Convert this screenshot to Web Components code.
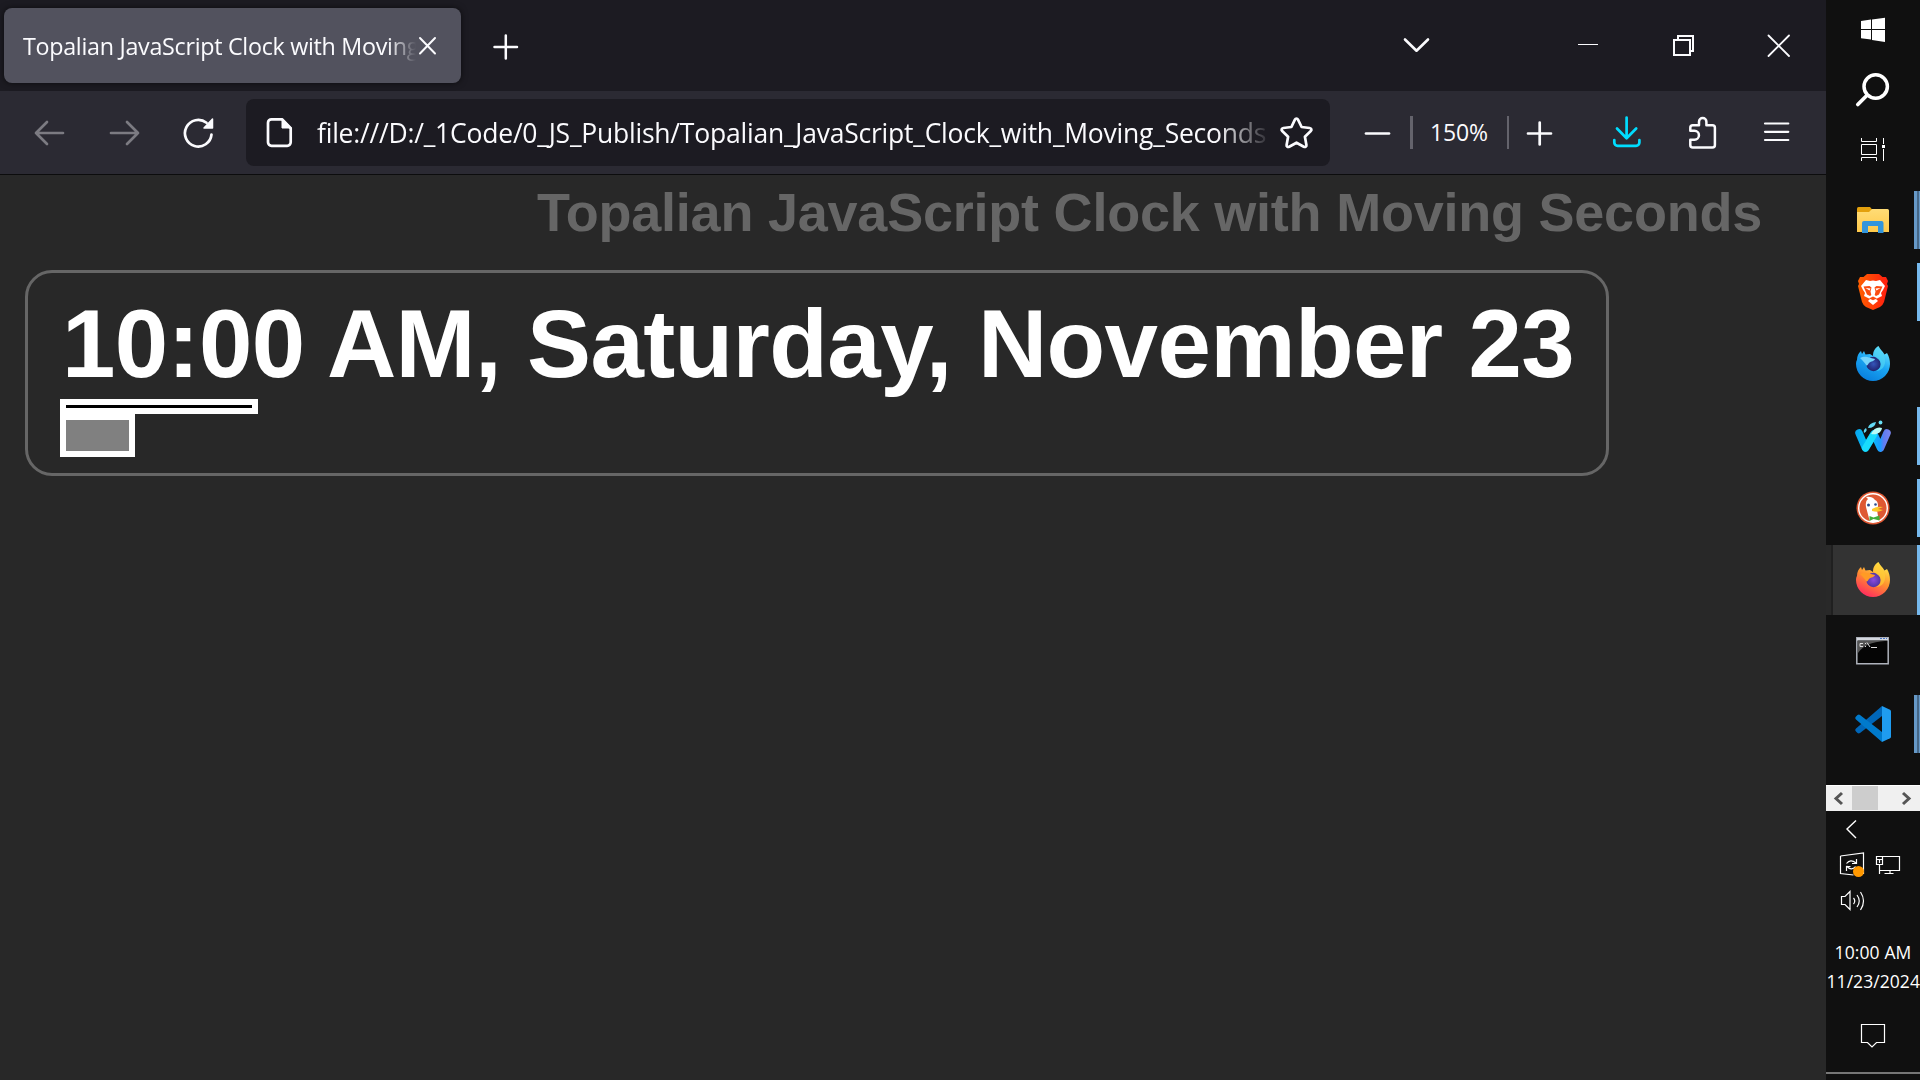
<!DOCTYPE html>
<html lang="en"><head><meta charset="utf-8"><title>Topalian JavaScript Clock with Moving Seconds</title>
<style>html,body{margin:0;height:100%;overflow:hidden;background:#111}body{font-family:"Open Sans","Noto Sans",sans-serif}</style></head>
<body>
<desktop-shell>
  <tab-strip slot="browser">Topalian JavaScript Clock with Moving</tab-strip>
  <nav-bar slot="browser">file:///D:/_1Code/0_JS_Publish/Topalian_JavaScript_Clock_with_Moving_Seconds</nav-bar>
  <clock-page slot="browser"><span slot="heading">Topalian JavaScript Clock with Moving Seconds</span><span slot="time">10:00 AM, Saturday, November 23</span></clock-page>
  <task-bar slot="side"></task-bar>
</desktop-shell>
<script>
function define(name, html) {
  const t = document.createElement('template');
  t.innerHTML = html;
  customElements.define(name, class extends HTMLElement {
    constructor() { super(); this.attachShadow({mode: 'open'}).append(t.content.cloneNode(true)); }
  });
}

/* Spreads its text over a given width by adjusting letter spacing. */
customElements.define('fit-text', class extends HTMLElement {
  constructor() {
    super();
    this.attachShadow({mode: 'open'}).innerHTML = '<style>:host{display:block;white-space:nowrap}span{display:inline-block}</style><span><slot></slot></span>';
  }
  connectedCallback() {
    requestAnimationFrame(() => this.fit());
    this.fit();
  }
  fit() {
    const s = this.shadowRoot.querySelector('span');
    s.style.letterSpacing = '0px';
    const w = s.getBoundingClientRect().width, n = Number(this.getAttribute('chars'));
    if (w) s.style.letterSpacing = (Number(this.getAttribute('width')) - w) / n + 'px';
  }
});

define('desktop-shell', `<style>
:host{display:flex;width:1920px;height:1080px;overflow:hidden}
main{width:1826px;display:flex;flex-direction:column}aside{width:94px}
</style><main><slot name="browser"></slot></main><aside><slot name="side"></slot></aside>`);

define('tab-strip', `<style>
:host{display:flex;height:91px;background:#1c1b22;color:#fbfbfe;padding-left:4px;box-sizing:border-box}
.tab{width:457px;height:75px;margin-top:8px;border-radius:8px;background:#52525e;box-shadow:0 0 6px #0009;display:flex;align-items:center;box-sizing:border-box;padding-left:19px}
.t{width:394px;height:40px;line-height:41px;font-size:23.3px;overflow:hidden;-webkit-mask-image:linear-gradient(90deg,#000 365px,transparent 393px);mask-image:linear-gradient(90deg,#000 365px,transparent 393px)}
svg{fill:none;stroke:#fbfbfe;stroke-linecap:round;stroke-width:2;flex:none;display:block}
.sp{flex:1}
</style>
<div class="tab"><div class="t"><fit-text width="396" chars="37"><slot></slot></fit-text></div>
<svg width="24" height="75" viewBox="417 8 24 75"><path d="M420 38l15 15.500M435 38l-15 15.500"/></svg></div>
<svg width="90" height="91" viewBox="461 0 90 91"><path stroke-width="2.500" d="M494.500 47H517M505.800 35.500v23"/></svg>
<div class="sp"></div>
<svg width="446" height="91" viewBox="1380 0 446 91"><path stroke-width="2.600" stroke-linejoin="round" d="M1405 39.500l11.500 11.200L1428 39.500"/><path stroke-width="1" stroke-linecap="butt" d="M1578 44.500h20"/><path stroke-width="2" stroke-linecap="butt" d="M1674 40h16v15h-16zM1678 40v-4h15v15h-3"/><path stroke-width="1.800" d="M1768.500 35.500l20.500 20.500M1789 35.500l-20.500 20.500"/></svg>`);

define('nav-bar', `<style>
:host{display:flex;height:84px;background:#2b2a33;border-bottom:1px solid #0c0c0d;box-sizing:border-box;color:#fbfbfe}
svg{display:block;flex:none;fill:none;stroke:#fbfbfe;stroke-width:2.700;stroke-linecap:round;stroke-linejoin:round}
.url{width:1084px;height:67px;margin-top:8px;background:#1c1b22;border-radius:8px;display:flex;align-items:center}
.u{flex:none;width:951px;height:44px;line-height:44px;font-size:26.500px;overflow:hidden;-webkit-mask-image:linear-gradient(90deg,#000 900px,transparent 955px);mask-image:linear-gradient(90deg,#000 900px,transparent 955px)}
.z{width:57px;padding:0 20px 0 17px;font-size:23px;line-height:32px;margin-top:25px;height:32px}
.bar{width:3px;height:33px;background:#64636c;margin-top:25px}.b2{width:2px}
</style>
<svg width="246" height="83" viewBox="0 91 246 83"><g stroke="#7c7b82"><path d="M63 133H36M47 122L36 133L47 144"/><path d="M111 133h27M127 122l11 11-11 11"/></g>
<path d="M211.500 134.500A13.300 13.300 0 1 1 206.500 122.800"/><path fill="#fbfbfe" stroke-width="1.500" d="M212.500 119v9h-8.500z"/></svg>
<div class="url"><svg width="71" height="67" viewBox="246 99 71 67"><path d="M271.500 119.300h10.500l8.700 9v14a3.500 3.500 0 0 1-3.500 3.500h-15.700a3.500 3.500 0 0 1-3.500-3.500v-19.500a3.500 3.500 0 0 1 3.500-3.500z"/><path fill="#fbfbfe" stroke-width="1" d="M282 119v9h9z"/></svg>
<div class="u"><fit-text width="949" chars="77"><slot></slot></fit-text></div>
<svg width="62" height="67" viewBox="1268 99 62 67"><path d="M1294.900 119.600c.7-1.500 2.400-1.500 3.100 0l3.600 7.400 8.100 1c1.700.2 2.300 1.900 1.100 3l-5.900 5.700 1.500 8.200c.3 1.600-1.100 2.600-2.600 1.800l-7.300-4-7.300 4c-1.500.8-2.900-.2-2.600-1.800l1.500-8.200-5.900-5.700c-1.200-1.100-.6-2.800 1.100-3l8.100-1z"/></svg></div>
<svg width="80" height="83" viewBox="1330 91 80 83"><path d="M1366 133.500h23"/></svg>
<div class="bar"></div><div class="z"><fit-text width="58" chars="4">150%</fit-text></div><div class="bar b2"></div>
<svg width="317" height="83" viewBox="1509 91 317 83"><path d="M1528 133.500h23M1539.700 122.500v22"/>
<g stroke="#00ddff"><path d="M1626.600 117.500v20.500M1617 128.500l9.600 9.700 9.600-9.700M1614.300 140v2.500a3.300 3.300 0 0 0 3.300 3.300h18.500a3.300 3.300 0 0 0 3.300-3.300V140"/></g>
<path stroke-width="2.500" d="M1690.300 130.800v-3a2.500 2.500 0 0 1 2.500-2.500h6.200v-3.600a3.700 3.700 0 0 1 7.400 0v3.600h6a2.500 2.500 0 0 1 2.500 2.500v17.200a2.500 2.500 0 0 1-2.500 2.500h-19.600a2.500 2.500 0 0 1-2.500-2.500v-5.300h4.200a4.450 4.450 0 0 0 0-8.900z"/>
<path stroke-width="2.200" d="M1765 123.500h23.300M1765 131.800h23.300M1765 140h23.300"/></svg>`);

define('moving-seconds', `<style>
:host{display:block}div{border:6px solid #fff;box-sizing:border-box}
.a{width:198px;height:15px;background:#000}.b{width:75px;height:43px;background:#808080}
</style><div class="a"></div><div class="b"></div>`);

define('clock-page', `<style>
:host{display:flex;flex-direction:column;flex:1;background:#282828;font-family:"Liberation Sans",Arial,sans-serif;font-weight:700}
.h{margin-left:537px;height:95px;line-height:74px;font-size:54px;color:#666}
.card{margin-left:25px;width:1584px;height:206px;box-sizing:border-box;border:3px solid #666;border-radius:27px;padding:17px 32px 0}
.t{color:#fff;font-size:96px;line-height:107px;height:109px;padding-left:2px}
</style><div class="h"><fit-text width="1225" chars="45"><slot name="heading"></slot></fit-text></div>
<div class="card"><div class="t"><fit-text width="1512" chars="31"><slot name="time"></slot></fit-text></div><moving-seconds></moving-seconds></div>`);

customElements.define('task-item', class extends HTMLElement {
  constructor() {
    super();
    this.attachShadow({mode: 'open'}).innerHTML = `<style>
:host{display:flex;height:72px;align-items:center;box-sizing:border-box}
.i{flex:1;padding-left:3px;display:flex;justify-content:center}
.m{width:3px;height:58px}
:host([open]) .m{background:#76b9ed}
:host([many]) .m{width:6px;background:linear-gradient(90deg,#6699c8 3px,#466787 3px 5px,#6699c8 5px)}
:host([many]) .i{padding-left:6px}
:host([raised]) .i{padding-bottom:2px}
:host([active]){height:70px;margin:1px 0;background:linear-gradient(90deg,#292929 5px,#202020 5px 7px,#333 7px)}
:host([active]) .m{height:70px}
</style><div class="i"><slot></slot></div><div class="m"></div>`;
  }
});

const fox = (id, c) => `<svg width="34" height="36" viewBox="0 0 34 36"><defs><linearGradient id="${id}" x1=".8" y1="0" x2=".3" y2="1"><stop offset="0" stop-color="${c[0]}"/><stop offset=".5" stop-color="${c[1]}"/><stop offset="1" stop-color="${c[2]}"/></linearGradient><radialGradient id="${id}b"><stop offset="0" stop-color="${c[3]}"/><stop offset="1" stop-color="${c[4]}"/></radialGradient></defs>
<path fill="url(#${id})" d="M1 15c0-4 1.500-7 4-9l1 3 2-3 1.500 3.500L14 9l3 2c0-5 2-8 5.500-10 1 3 4 5 6 8.500L31 8c2 3 3 7 3 11a17 17 0 0 1-34 0c0-1.500.3-3 1-4z"/>
<circle cx="17.500" cy="19" r="7.200" fill="url(#${id}b)"/>
<path fill="${c[5]}" d="M4 13c3-2 7-1.500 9-.5l6 1.500c-.5 2-4 2.500-5.500 3.500-1.500 1-1.500 3-3 3C9 18 7 16 4 13z"/><path fill="${c[6]}" opacity=".65" d="M23 2c1 5 5 7 6 12 1 7-3 12-9 12 5-2 6-8 3-11-2-2-5-3-5-6 0-3 2-6 5-7z"/></svg>`;

define('task-bar', `<style>
:host{display:flex;flex-direction:column;width:94px;height:1080px;background:#101010;color:#fff}
svg{display:block}.top,.tray,.note{flex:none}.top{height:184px}
.scroll{height:26px;margin-top:25px;background:#f0f0f0}
.time{height:75px;font-size:17.500px;line-height:29px;padding-top:18px;box-sizing:border-box}
.time .a{padding-left:8.500px}.time .b{padding-left:.5px}
</style>
<svg class="top" width="94" height="184" viewBox="1826 0 94 184" fill="none" stroke="#fff">
<path fill="#fff" stroke="none" d="M1861 21l10-1.400V29h-10zM1872 19.400l13-1.600V29h-13zM1861 30h10v9.600l-10-1.300zM1872 30h13v12l-13-2z"/>
<circle cx="1875.700" cy="86.500" r="11.700" stroke-width="3.500"/><path stroke-width="3.700" stroke-linecap="round" d="M1866.800 95.500l-9 9"/>
<path stroke-width="1" d="M1861.500 138v3.500h15V138M1861.500 144.500h15v10h-15zM1861.500 161v-3.500h15v3.500M1883.500 138v6M1883.500 149v12"/><path fill="#fff" stroke="none" d="M1882 145h3v3h-3z"/></svg>
<task-item many><svg width="32" height="27" viewBox="0 0 32 27"><defs><linearGradient id="fo" x2="0" y2="1"><stop stop-color="#ffdc76"/><stop offset="1" stop-color="#ffc94a"/></linearGradient></defs><path fill="#e3a00d" d="M0 1.500Q0 0 1.500 0H13l2.500 3L13 6H0z"/><path fill="url(#fo)" d="M0 5h12l3-3h15.500Q32 2 32 3.500V25H0z"/><path fill="#3295dc" d="M5 26V16q0-2 2-2h17.500q2 0 2 2v10H21v-7H11v7z"/></svg></task-item>
<task-item open><svg width="30" height="36" viewBox="0 0 30 36"><defs><linearGradient id="br"><stop stop-color="#ff6000"/><stop offset="1" stop-color="#ff1d10"/></linearGradient></defs><path fill="url(#br)" d="M9 0h12l3.500 3H28l2 4-1 3 1 2-4 16q-1 3-4 5l-7 3-7-3q-3-2-4-5L0 12l1-2-1-3 2-4h3.500z"/><path fill="#fff" d="M8 6l4 1q3-1 6 0l4-1 5 6-2 4-2 3 1 3-4 2-2 1 2 2-5 4-5-4 2-2-2-1-4-2 1-3-2-3-2-4z"/><path fill="#fb4b10" d="M5.500 12.500l6-.5 2 1.500-1 4 .8 3.500-1.300 1-3-1.500zM24.500 12.500l-6-.5-2 1.500 1 4-.8 3.500 1.300 1 3-1.500zM11 24.500l4-2 4 2-4 1.800z"/><path fill="#fff" d="M7.500 14l5 .5-1 2zM22.500 14l-5 .5 1 2z"/></svg></task-item>
<task-item raised>${fox('fd', ['#70eaff', '#1ba6f3', '#087edc', '#3455b9', '#202471', '#75d5fc', '#52d5f3'])}</task-item>
<task-item open><svg width="36" height="33" viewBox="0 0 36 33"><defs><linearGradient id="w" gradientUnits="userSpaceOnUse" x1="0" y1="0" x2="36" y2="0"><stop stop-color="#0aa4ee"/><stop offset=".4" stop-color="#00c8fa"/><stop offset=".7" stop-color="#1a9cff"/><stop offset=".8" stop-color="#5f7cf0"/><stop offset="1" stop-color="#7c86ee"/></linearGradient></defs><path fill="none" stroke="url(#w)" stroke-width="7.500" stroke-linecap="round" stroke-linejoin="round" d="M4 13L10.500 28L19 14L25.500 28L32 13"/><path stroke="#19dcfc" stroke-width="7" stroke-linecap="round" d="M10.500 28l8-13"/><path fill="#b8fbf7" d="M16 14q4-8 11-6c-1 5-5 7-11 6z"/><path fill="#62d9f4" d="M13 8q1-5 8-6-1 6-8 6zM9 13q-1-3 2-5 2 3-2 5z"/><circle cx="25.500" cy="2.500" r="1.900" fill="#68dff5"/></svg></task-item>
<task-item open><svg width="34" height="34" viewBox="0 0 34 34"><circle cx="17" cy="17" r="16.500" fill="#de5833"/><circle cx="17" cy="17" r="14.300" fill="#de5833" stroke="#fff" stroke-width="1.400"/><path fill="#fff" d="M14 31l-4-15q-1-6 2-8l-2-2q6-1 9 3 3 1 3 6l-1 4 2 12z"/><path fill="#fdca2a" d="M16 18q5-3 11-2l-5 2 5 1q-5 3-11 1z"/><circle cx="12.500" cy="14" r="1.500" fill="#2d4f8e"/><circle cx="19.500" cy="13.500" r="1.300" fill="#2d4f8e"/><path fill="#43ad38" d="M13.500 25l4 1.500 6-2v5l-6-1.500-4 2z"/></svg></task-item>
<task-item active open raised>${fox('ff', ['#fff04b', '#ff912e', '#ff2860', '#8a4bdf', '#5134a5', '#ff9b25', '#ffd035'])}</task-item>
<task-item raised><svg width="35" height="28" viewBox="0 0 35 28"><path fill="#050505" stroke="#aeb2bb" stroke-width="1.500" d="M.8.800h31.400v26H.8z"/><path fill="#d4d8df" d="M1 1h31v2.500H1z"/><path stroke="#4b77c4" stroke-width="1" stroke-dasharray="2 1" d="M24 1.500h7"/><path fill="#555" d="M2 4h27Q9 5 2 16z"/><path fill="none" stroke="#ddd" stroke-width="1" d="M7 6.500H4v3h3M9.500 6v1M9.500 9v1M11 5.500l3 4.500M15 10.500h6"/></svg></task-item>
<task-item many><svg width="36" height="36" viewBox="0 0 36 36"><path fill="#0066b8" d="M1 22.500q-1.500 1.500 0 3l1.500 1.500q1 .8 2.500 0L27 10V0z"/><path fill="#007acc" d="M1 13.500q-1.500-1.500 0-3L2.500 9Q4 8 5 9l22 17v10z"/><path fill="#1f9cf0" d="M27 0l8 3.700q1 .5 1 1.500v25.600q0 1-1 1.500L27 36z"/></svg></task-item>
<svg class="scroll" width="94" height="26" viewBox="1826 785 94 26"><path fill="#fff" d="M1826 785h94v1h-94z"/><path fill="#cdcdcd" d="M1852 786h26v24h-26z"/><path fill="none" stroke="#555" stroke-width="3" d="M1842 793l-6 5.500 6 5.500M1903 793l6 5.500-6 5.500"/></svg>
<svg class="tray" width="94" height="109" viewBox="1826 811 94 109" fill="none" stroke="#fff" stroke-width="1.200">
<path stroke-width="1.400" d="M1856 820.500l-9 8.500 9 9"/>
<path d="M1840.500 856l23-3v21M1840.500 856v17.500l13 1.500M1846.500 863.500q4-5 9.500-.5M1856.500 859v4.500h-4.500M1855.500 866.500q-4 5-9-.5M1846.500 871v-4.500h4"/><circle cx="1858.500" cy="871.500" r="5.500" fill="#ff9800" stroke="none"/>
<path d="M1882.500 856.500h17v14h-20M1890 870.500v3M1884.500 873.500h9M1876.500 856.500h6v8h-6zM1876.500 859.500h6M1879.500 860v3M1879.500 864.500v9.500"/>
<path d="M1841.500 896.500h3.500l5-5v18l-5-5h-3.500zM1853.500 898q2.500 3 0 6M1857 895q4.500 6 0 12M1860.500 892q6 9 0 18"/></svg>
<div class="time"><fit-text class="a" width="77" chars="8">10:00 AM</fit-text><fit-text class="b" width="93.5" chars="10">11/23/2024</fit-text></div>
<svg class="note" width="94" height="85" viewBox="1826 995 94 85"><path fill="none" stroke="#fff" stroke-width="1.200" d="M1861.500 1024.500h23v18h-8l-4.500 4.500-4.500-4.500h-6z"/><path fill="#777" d="M1826 1072h94v2h-94z"/></svg>`);
</script></body></html>
